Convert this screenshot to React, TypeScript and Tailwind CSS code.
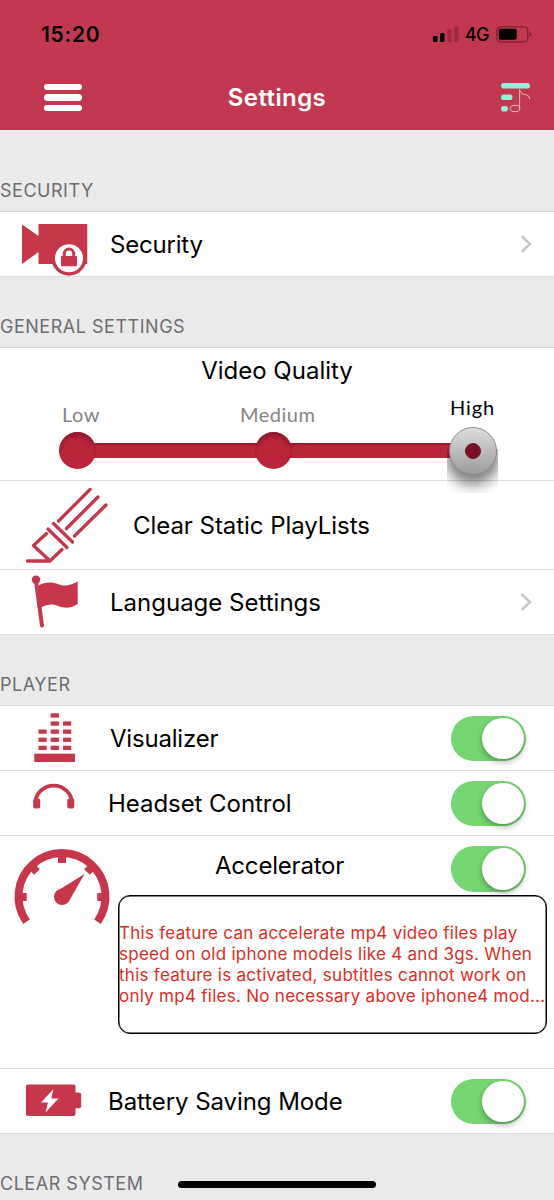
import type { ReactNode } from 'react';
import clsx from 'clsx';

const RED = '#c7364b';

function StatusBar() {
  return (
    <div className="flex h-[68px] items-center justify-between pr-[22px] pl-[41px] text-black">
      <span className="pt-[1px] text-[21px] leading-none font-semibold tracking-[0.7px]">15:20</span>
      <div className="flex items-center">
        <svg width="27" height="16" viewBox="0 0 27 16">
          <rect x="1" y="10" width="4.5" height="6" rx="1.3" />
          <rect x="8" y="7" width="4.5" height="9" rx="1.3" />
          <rect x="15" y="3.5" width="4.5" height="12.5" rx="1.3" fill="#9b2b40" />
          <rect x="22" y="0.5" width="4.5" height="15.5" rx="1.3" fill="#9b2b40" />
        </svg>
        <span className="mt-[2px] ml-[6px] text-[18px] leading-none font-medium tracking-[-0.5px]">4G</span>
        <svg className="ml-[7px]" width="36" height="17" viewBox="0 0 36 17">
          <rect x="0.8" y="0.8" width="31" height="15" rx="4" fill="none" stroke="#7d1f32" strokeWidth="1.3" />
          <rect x="2.7" y="2.8" width="18" height="11" rx="2" />
          <path d="M33.5 5.8c2.3 1 2.3 4 0 5z" fill="#7d1f32" />
        </svg>
      </div>
    </div>
  );
}

function NavBar() {
  return (
    <div className="flex h-[62px] items-center justify-between pr-[23px] pb-[3px] pl-[44px]">
      <div className="flex w-[38px] flex-col gap-[4px]">
        <div className="h-[6.5px] rounded-full bg-white" />
        <div className="h-[6.5px] rounded-full bg-white" />
        <div className="h-[6.5px] rounded-full bg-white" />
      </div>
      <h1 className="mr-[13px] ml-[-15px] text-[24px] leading-none font-semibold tracking-[0.4px] text-white">
        Settings
      </h1>
      <svg width="31" height="31" viewBox="0 0 31 31" fill="none">
        <rect x="1" y="1" width="29" height="5.6" rx="2.8" fill="#90f0dc" />
        <rect x="1" y="12.4" width="11.5" height="5.6" rx="2.8" fill="#90f0dc" />
        <rect x="1" y="24" width="7" height="5.6" rx="2.8" fill="#90f0dc" />
        <g stroke="#ecc0bd" strokeWidth="1">
          <ellipse cx="15" cy="26.5" rx="4.8" ry="3.2" />
          <path d="M19.6 27V7.500c.5 3 2 4.200 5 5 3 .4 5 1.500 5 4.500" />
        </g>
      </svg>
    </div>
  );
}

function CameraLockIcon() {
  return (
    <svg className="w-full" height="64" viewBox="0 0 110 64">
      <path d="M22 12.500 38.500 24V12h48.800v40H38.500V40L22 52z" fill={RED} />
      <circle cx="69" cy="46.200" r="15.800" fill="#fff" stroke={RED} strokeWidth="3.500" />
      <rect x="61" y="44" width="16" height="10.300" rx="1" fill={RED} />
      <path d="M64.300 45v-3.200a4.700 4.700 0 0 1 9.400 0V45" fill="none" stroke={RED} strokeWidth="3" />
    </svg>
  );
}

function PencilIcon() {
  return (
    <svg className="w-full" height="88" viewBox="0 0 134 88" fill="none" stroke={RED} strokeWidth="3.300" strokeLinecap="round" strokeLinejoin="round">
      <path d="M58.500 40 90 8.500M66.500 47.500 98 16M74.500 55 106 24" />
      <path d="M53.500 42.500 72.500 61M48 48 67 66.500" />
      <path d="M46.500 52.500 33.500 64.500 50 80 62 68.500M27.500 80H50" />
    </svg>
  );
}

function FlagIcon() {
  return (
    <svg className="w-full" height="64" viewBox="0 0 110 64" fill={RED}>
      <circle cx="36" cy="9.800" r="4.200" />
      <path d="M36 11 42 55.500" stroke={RED} strokeWidth="4" strokeLinecap="round" />
      <path d="M37.500 16.500C42 12.500 51 11 58 14c7 2.800 12 1.500 19.700-2.500V34c-5 3.500-12.500 5-18.700 2.200-6-2.700-12-2-18 1.300z" />
    </svg>
  );
}

function VisualizerIcon() {
  const bars = [
    { x: 38.5, count: 3 },
    { x: 50.7, count: 5 },
    { x: 63, count: 4 },
  ];

  return (
    <svg className="w-full" height="64" viewBox="0 0 110 64" fill={RED}>
      {bars.map((bar) =>
        Array.from({ length: bar.count }, (_, i) => (
          <rect key={`${bar.x}-${i}`} x={bar.x} y={39.7 - i * 8.1} width="8.200" height="4.300" />
        ))
      )}
      <rect x="34.300" y="47.700" width="40.700" height="8.300" />
    </svg>
  );
}

function HeadsetIcon() {
  return (
    <svg className="w-full" height="64" viewBox="0 0 108 64" fill={RED}>
      <path d="M35.300 31A18.400 17.700 0 0 1 72 31" fill="none" stroke={RED} strokeWidth="3.700" />
      <rect x="33.200" y="27.500" width="7" height="10" rx="2" />
      <rect x="67.300" y="27.500" width="7" height="10" rx="2" />
    </svg>
  );
}

function GaugeIcon() {
  return (
    <svg width="118" height="100" viewBox="0 0 118 100" fill={RED}>
      <path d="M26.500 85.700A43.500 43.500 0 1 1 97.500 85.700" fill="none" stroke={RED} strokeWidth="8" />
      <path d="M62 18v9M37 36l-6-6M87 36l6-6M18 61h8.700M97.300 61h9" stroke={RED} strokeWidth="8" />
      <circle cx="62" cy="61" r="8" />
      <path d="M55.500 56 84.500 38 68.500 66z" />
    </svg>
  );
}

function BatteryIcon() {
  return (
    <svg className="w-full" height="64" viewBox="0 0 108 64" fill={RED}>
      <rect x="26" y="15.500" width="49.500" height="31.500" rx="2" />
      <rect x="72" y="23.500" width="9.200" height="15.700" rx="2" />
      <path d="M53.500 20 41 33.500h7L45.500 43.500 58.500 29.500h-7.200z" fill="#fff" />
    </svg>
  );
}

function Chevron() {
  return (
    <svg className="mr-[21px] ml-auto" width="14" height="20" viewBox="0 0 14 20" fill="none">
      <path d="M2.500 2 11 10 2.500 18" stroke="#c7c7cc" strokeWidth="2.500" />
    </svg>
  );
}

function Toggle() {
  return (
    <div className="mt-[1px] mr-[28px] ml-auto flex h-[45.5px] w-[75.5px] shrink-0 items-center justify-end rounded-full bg-[#76d672] pr-[2.5px]">
      <div className="size-[41.5px] rounded-full bg-white shadow-[0_3px_6px_rgba(0,0,0,0.3)]" />
    </div>
  );
}

function SectionHeader({ title, className }: { title: string; className?: string }) {
  return (
    <div
      className={clsx(
        'flex items-end border-b border-[#d9d9db] pb-[10px] text-[18px] leading-[20px] tracking-[0.52px] text-[#6d6d72]',
        className
      )}
    >
      {title}
    </div>
  );
}

function Row({
  icon,
  label,
  labelClass,
  iconClass = 'w-[110px]',
  className = 'h-[65px]',
  children,
}: {
  icon: ReactNode;
  label: string;
  labelClass?: string;
  iconClass?: string;
  className?: string;
  children?: ReactNode;
}) {
  return (
    <div className={clsx('flex items-center border-b border-[#dcdcdd] bg-white', className)}>
      <div className={clsx('shrink-0', iconClass)}>{icon}</div>
      <span className={clsx('pt-[2px] text-[24px] leading-none whitespace-nowrap', labelClass)}>{label}</span>
      {children}
    </div>
  );
}

function SliderStop({ className }: { className: string }) {
  return (
    <div
      className={clsx(
        'absolute top-0 size-[37px] rounded-full bg-[#bc2539] shadow-[inset_0_5px_5px_-1px_rgba(110,15,40,0.6)]',
        className
      )}
    />
  );
}

function VideoQuality() {
  return (
    <div className="h-[133px] border-b border-[#dcdcdd] bg-white pt-[10px]">
      <div className="text-center text-[24px] leading-[26px]">Video Quality</div>
      <div className="flex h-[42px] items-end pl-[62px] font-['Lato',sans-serif] text-[20px] leading-[24px] tracking-[0.5px] text-[#858585]">
        <span className="w-[178px]">Low</span>
        <span className="w-[210px]">Medium</span>
        <span className="mb-[7px] tracking-[0.9px] text-black">High</span>
      </div>
      <div className="relative mt-[6px] ml-[59px] flex h-[37px] w-[438px] items-center">
        <div className="ml-[20px] h-[15px] w-[390px] bg-[#bc2539] shadow-[inset_0_2px_2px_rgba(110,15,40,0.5)]" />
        <SliderStop className="left-0" />
        <SliderStop className="left-[196px]" />
        <div className="absolute top-[17px] right-[-1px] z-10 h-[44px] w-[51px] overflow-hidden">
          <div className="mx-auto mt-[-22px] size-[46px] rounded-full bg-black/50 shadow-[0_8px_14px_4px_rgba(0,0,0,0.5)]" />
        </div>
        <div className="absolute top-[-5px] right-0 z-10 flex size-[48px] items-center justify-center rounded-full border border-[#8e8e8e] bg-linear-to-b from-[#dcdcdc] to-[#9c9c9c]">
          <div className="size-[16px] rounded-full border border-[#64202c] bg-[#7d0f24]" />
        </div>
      </div>
    </div>
  );
}

function AcceleratorRow() {
  return (
    <div className="flex h-[233px] border-b border-[#dcdcdd] bg-white">
      <GaugeIcon />
      <div className="flex flex-1 flex-col">
        <div className="flex h-[59px] items-start pt-[9px]">
          <span className="mt-[9px] ml-[97px] text-[24px] leading-none tracking-[-0.2px]">Accelerator</span>
          <Toggle />
        </div>
        <div className="flex h-[138.5px] w-[429px] items-center rounded-[12px] border border-black shadow-[inset_0_0_0_0.5px_#000]">
          <p className="pt-[2px] text-[17px] leading-[21px] tracking-[0.27px] whitespace-nowrap text-[#dc2d24]">
            This feature can accelerate mp4 video files play
            <br />
            speed on old iphone models like 4 and 3gs. When
            <br />
            this feature is activated, subtitles cannot work on
            <br />
            only mp4 files. No necessary above iphone4 mod...
          </p>
        </div>
      </div>
    </div>
  );
}

export default function App() {
  return (
    <div className="relative h-[1200px] w-[554px] overflow-hidden bg-[#eaeaea] font-['Inter',sans-serif] text-black">
      <header className="h-[130px] bg-[#c23850]">
        <StatusBar />
        <NavBar />
      </header>

      <SectionHeader title="SECURITY" className="h-[82px]" />
      <Row icon={<CameraLockIcon />} label="Security" labelClass="tracking-[-0.2px]">
        <Chevron />
      </Row>

      <SectionHeader title="GENERAL SETTINGS" className="h-[71px]" />
      <VideoQuality />
      <Row
        icon={<PencilIcon />}
        label="Clear Static PlayLists"
        iconClass="w-[134px]"
        className="h-[89px]"
        labelClass="-ml-px tracking-[-0.05px]"
      />
      <Row icon={<FlagIcon />} label="Language Settings">
        <Chevron />
      </Row>

      <SectionHeader title="PLAYER" className="h-[71px]" />
      <Row icon={<VisualizerIcon />} label="Visualizer" labelClass="tracking-[-0.2px]">
        <Toggle />
      </Row>
      <Row icon={<HeadsetIcon />} label="Headset Control" iconClass="w-[108px]" labelClass="tracking-[-0.05px]">
        <Toggle />
      </Row>
      <AcceleratorRow />
      <Row icon={<BatteryIcon />} label="Battery Saving Mode" iconClass="w-[108px]" labelClass="tracking-[-0.07px]">
        <Toggle />
      </Row>

      <SectionHeader title="CLEAR SYSTEM" className="h-[71px]" />

      <div className="absolute bottom-[12px] left-[178px] h-[7.5px] w-[198px] rounded-full bg-black" />
    </div>
  );
}
